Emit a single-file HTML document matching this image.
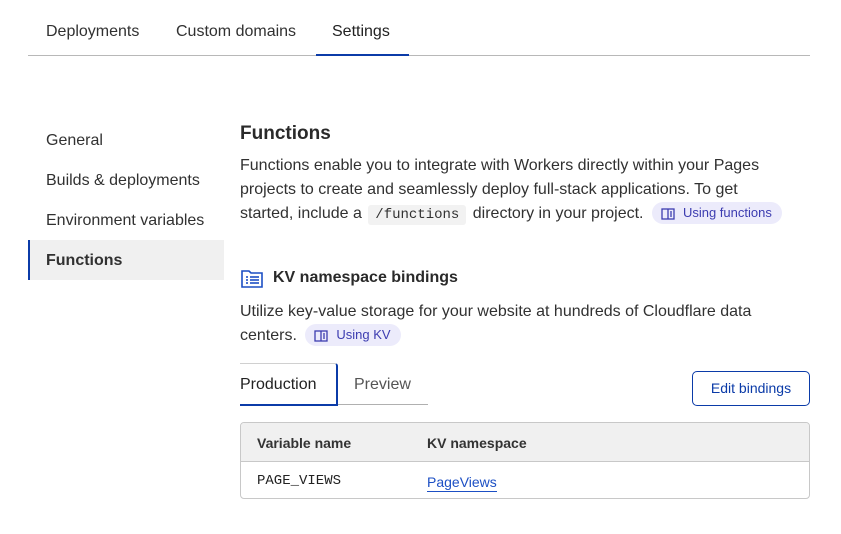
<!DOCTYPE html>
<html><head><style>
body{margin:0;width:841px;height:534px;background:#fff;font-family:"Liberation Sans",sans-serif;color:#313131;position:relative;overflow:hidden}
.a{position:absolute;white-space:nowrap}
.p{font-size:16px;line-height:24px;color:#313131}
.pill{display:inline-block;background:#ecebfb;color:#3c3cb0;border-radius:12px;font-size:13px;line-height:22px;padding:0 10px 0 9px;vertical-align:1px;margin-left:4px}
.pill svg{vertical-align:-3px;margin-right:8px}
code{font-family:"Liberation Mono",monospace;background:#f2f2f2;font-size:14px;padding:2px 7px;border-radius:3px;margin:0 2px}
</style></head><body>
<div class="a" style="left:46px;top:23px;font-size:16px">Deployments</div>
<div class="a" style="left:176px;top:23px;font-size:16px">Custom domains</div>
<div class="a" style="left:332px;top:23px;font-size:16px;color:#222">Settings</div>
<div class="a" style="left:28px;top:55px;width:782px;height:1px;background:#b8b8b8"></div>
<div class="a" style="left:316px;top:54px;width:93px;height:2px;background:#0b3ba8"></div>

<div class="a" style="left:46px;top:132px;font-size:16px">General</div>
<div class="a" style="left:46px;top:172px;font-size:16px">Builds &amp; deployments</div>
<div class="a" style="left:46px;top:212px;font-size:16px">Environment variables</div>
<div class="a" style="left:28px;top:240px;width:196px;height:40px;background:#f0f0f0;border-left:2px solid #0b3ba8;box-sizing:border-box"></div>
<div class="a" style="left:46px;top:252px;font-size:16px;font-weight:bold">Functions</div>

<div class="a" style="left:240px;top:123px;font-size:19px;font-weight:bold;color:#2a2a2a">Functions</div>
<div class="a p" style="left:240px;top:154px">Functions enable you to integrate with Workers directly within your Pages</div>
<div class="a p" style="left:240px;top:178px">projects to create and seamlessly deploy full-stack applications. To get</div>
<div class="a p" style="left:240px;top:202px">started, include a <code>/functions</code> directory in your project. <span class="pill"><svg width="14" height="12" viewBox="0 0 14 12" fill="none" stroke="#3c3cb0" stroke-width="1.3"><rect x="1" y="1" width="12" height="10"/><line x1="7" y1="1" x2="7" y2="11"/><line x1="9" y1="4" x2="11" y2="4"/><line x1="9" y1="6" x2="11" y2="6"/><line x1="9" y1="8" x2="11" y2="8"/></svg>Using functions</span></div>

<svg class="a" style="left:241px;top:270px" width="22" height="18" viewBox="0 0 22 18" fill="none" stroke="#1c4fc4" stroke-width="1.6"><path d="M1 1h7l2 2h11v14H1z"/><line x1="5" y1="7" x2="7" y2="7"/><line x1="9" y1="7" x2="18" y2="7"/><line x1="5" y1="10" x2="7" y2="10"/><line x1="9" y1="10" x2="18" y2="10"/><line x1="5" y1="13" x2="7" y2="13"/><line x1="9" y1="13" x2="18" y2="13"/></svg>
<div class="a" style="left:273px;top:269px;font-size:16px;font-weight:bold;color:#2a2a2a">KV namespace bindings</div>
<div class="a p" style="left:240px;top:300px">Utilize key-value storage for your website at hundreds of Cloudflare data</div>
<div class="a p" style="left:240px;top:324px">centers. <span class="pill"><svg width="14" height="12" viewBox="0 0 14 12" fill="none" stroke="#3c3cb0" stroke-width="1.3"><rect x="1" y="1" width="12" height="10"/><line x1="7" y1="1" x2="7" y2="11"/><line x1="9" y1="4" x2="11" y2="4"/><line x1="9" y1="6" x2="11" y2="6"/><line x1="9" y1="8" x2="11" y2="8"/></svg>Using KV</span></div>

<div class="a" style="left:240px;top:363px;width:98px;height:43px;border:1px solid #d0d0d0;border-right:2px solid #0b3ba8;border-bottom:2px solid #0b3ba8;border-radius:0 3px 0 0;box-sizing:border-box;border-left:none"></div>
<div class="a" style="left:338px;top:404px;width:90px;height:1px;background:#b0b0b0"></div>
<div class="a" style="left:240px;top:376px;font-size:16px;color:#222">Production</div>
<div class="a" style="left:354px;top:376px;font-size:16px;color:#555">Preview</div>
<div class="a" style="left:692px;top:371px;width:118px;height:35px;border:1px solid #0b3ba8;border-radius:5px;box-sizing:border-box;color:#0b3ba8;font-size:14px;line-height:33px;text-align:center">Edit bindings</div>

<div class="a" style="left:240px;top:422px;width:570px;height:77px;border:1px solid #c8c8c8;border-radius:4px;box-sizing:border-box;overflow:hidden">
<div style="height:38px;background:#f0f0f0;border-bottom:1px solid #c8c8c8"></div>
</div>
<div class="a" style="left:257px;top:435px;font-size:14px;font-weight:bold;color:#333">Variable name</div>
<div class="a" style="left:427px;top:435px;font-size:14px;font-weight:bold;color:#333">KV namespace</div>
<div class="a" style="left:257px;top:473px;font-size:14px;font-family:'Liberation Mono',monospace;color:#222">PAGE_VIEWS</div>
<div class="a" style="left:427px;top:474px;font-size:14px;color:#1c4fc4;border-bottom:1px solid #1c4fc4;line-height:17px">PageViews</div>
</body></html>
